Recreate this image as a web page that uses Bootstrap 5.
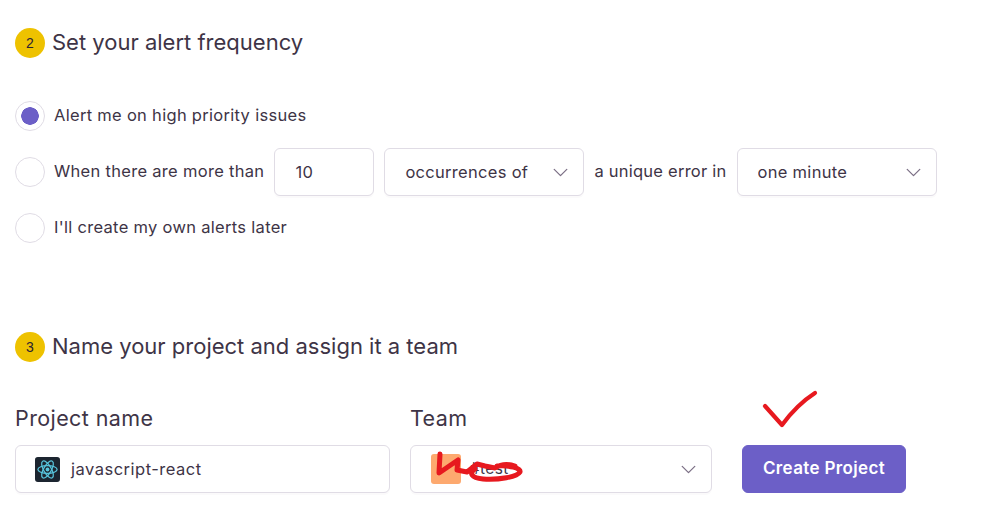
<!DOCTYPE html>
<html lang="en">
<head>
  <meta charset="UTF-8">
  <title>Create Project</title>
  <link href="https://cdn.jsdelivr.net/npm/bootstrap@5.3.3/dist/css/bootstrap.min.css" rel="stylesheet">
  <style>
    body {
      font-family: "Inter", "Liberation Sans", sans-serif;
      color: #3e3446;
      background: #fff;
      overflow: hidden;
    }
    .page-wrap {
      width: 985px;
      height: 518px;
      padding: 28px 0 0 15px;
    }
    .step-num {
      width: 30px;
      height: 30px;
      background: #eec200;
      color: #2b2233;
      font-family: "Liberation Sans", sans-serif;
      font-size: 14px;
    }
    .step-title {
      font-size: 22px;
      font-weight: 400;
      line-height: 30px;
      margin: -2px 0 0 7px;
    }
    .alert-opts {
      margin-top: 30px;
      height: 244px;
    }
    .opt-row {
      height: 56px;
      font-size: 16.5px;
      letter-spacing: .3px;
    }
    .opt-row label, .opt-row span {
      position: relative;
      top: -1px;
    }
    .opt-row span { letter-spacing: .24px; }
    .opt-row .form-check-input {
      width: 30px;
      height: 30px;
      margin: 0 9px 0 0;
      border: 1px solid #e0dce5;
      flex: none;
    }
    .opt-row .form-check-input:checked {
      background-color: #fff;
      border-color: #e0dce5;
      background-image: radial-gradient(circle, #6c5fc7 0, #6c5fc7 8.5px, transparent 9px);
    }
    .opt-row .form-check-input:focus {
      box-shadow: none;
    }
    .form-control.field, .form-select.field {
      height: 48px;
      border: 1px solid #e0dce5;
      border-radius: 6px;
      color: #3e3446;
      font-size: 16.5px;
      letter-spacing: .3px;
      padding: 0 20px;
      box-shadow: 0 2px 0 rgba(37, 11, 54, .02);
    }
    .form-select.field {
      --bs-form-select-bg-img: none;
      background-image: url("data:image/svg+xml,%3csvg xmlns='http://www.w3.org/2000/svg' viewBox='0 0 16 10'%3e%3cpath fill='none' stroke='%237b6f85' stroke-width='1.4' stroke-linecap='round' stroke-linejoin='round' d='M1 1.5l7 7 7-7'/%3e%3c/svg%3e");
      background-position: right 15px center;
      background-size: 15px 9px;
    }
    .w-count { width: 100px; }
    .w-kind { width: 200px; }
    .gap-10 { gap: 10px; }
    .more-label { margin-right: 10px; }
    .project-row { margin-top: 42px; }
    .field-label {
      font-size: 21.5px;
      letter-spacing: .4px;
      line-height: 28px;
      margin-bottom: 13px;
    }
    .name-col { width: 375px; margin-right: 20px; }
    .team-col { width: 302px; margin-right: 30px; }
    .form-control.name-box {
      padding-left: 19px;
      gap: 11px;
      letter-spacing: .5px;
    }
    .form-select.team-box {
      position: relative;
      padding-left: 20px;
      gap: 9px;
    }
    .team-pic {
      width: 30px;
      height: 30px;
      background: #fda96f;
      border-radius: 3px;
    }
    .team-name { font-size: 15.5px; }
    .scribble {
      position: absolute;
      left: 14px;
      top: -1px;
      width: 105px;
      height: 48px;
      overflow: visible;
    }
    .btn-create {
      --bs-btn-bg: #6c5fc7;
      --bs-btn-border-color: #6c5fc7;
      --bs-btn-hover-bg: #5b4eb5;
      --bs-btn-hover-border-color: #5b4eb5;
      --bs-btn-color: #fff;
      --bs-btn-hover-color: #fff;
      width: 164px;
      height: 48px;
      font-size: 17px;
      font-weight: 600;
      letter-spacing: .35px;
      padding: 0;
      border-radius: 6px;
      position: relative;
    }
    .tick {
      position: absolute;
      left: 19px;
      top: -54px;
      width: 56px;
      height: 44px;
      overflow: visible;
    }
  </style>
</head>
<body>

  <div class="page-wrap">
    <div class="d-flex align-items-center">
      <span class="step-num rounded-circle d-flex align-items-center justify-content-center">2</span>
      <h2 class="step-title">Set your alert frequency</h2>
    </div>

    <div class="alert-opts">
      <div class="opt-row d-flex align-items-center">
        <input class="form-check-input" type="radio" name="freq" id="optHigh" checked>
        <label for="optHigh">Alert me on high priority issues</label>
      </div>
      <div class="opt-row d-flex align-items-center">
        <input class="form-check-input" type="radio" name="freq" id="optMore">
        <label for="optMore" class="more-label">When there are more than</label>
        <div class="d-flex align-items-center gap-10">
          <input class="form-control field w-count" type="text" value="10">
          <select class="form-select field w-kind"><option>occurrences of</option></select>
          <span>a unique error in</span>
          <select class="form-select field w-kind"><option>one minute</option></select>
        </div>
      </div>
      <div class="opt-row d-flex align-items-center">
        <input class="form-check-input" type="radio" name="freq" id="optLater">
        <label for="optLater">I'll create my own alerts later</label>
      </div>
    </div>

    <div class="d-flex align-items-center">
      <span class="step-num rounded-circle d-flex align-items-center justify-content-center">3</span>
      <h2 class="step-title">Name your project and assign it a team</h2>
    </div>

    <div class="d-flex align-items-end project-row">
      <div class="name-col">
        <div class="field-label">Project name</div>
        <div class="form-control field name-box d-flex align-items-center">
          <svg width="25" height="25" viewBox="0 0 26 26">
            <rect width="26" height="26" rx="3" fill="#1c2530"/>
            <g fill="none" stroke="#58c4dc" stroke-width="1.3">
              <ellipse cx="13" cy="13" rx="10" ry="4"/>
              <ellipse cx="13" cy="13" rx="10" ry="4" transform="rotate(60 13 13)"/>
              <ellipse cx="13" cy="13" rx="10" ry="4" transform="rotate(120 13 13)"/>
            </g>
            <circle cx="13" cy="13" r="2" fill="#58c4dc"/>
          </svg>
          <span>javascript-react</span>
        </div>
      </div>
      <div class="team-col">
        <div class="field-label">Team</div>
        <div class="form-select field team-box d-flex align-items-center">
          <span class="team-pic d-block"></span>
          <span class="team-name">#test</span>
          <svg class="scribble" viewBox="0 0 105 48">
            <path d="M15 9L14 28L33 15L32 25L42 27L52 19L60 21L70 23C76 19 84 19 90 21M50 24C44 28 46 33 58 34C74 35 92 32 95 27C96 23 84 20 72 21" fill="none" stroke="#e7191f" stroke-width="5" stroke-linecap="round" stroke-linejoin="round"/>
          </svg>
        </div>
      </div>
      <button class="btn btn-create" type="button">
        Create Project
        <svg class="tick" viewBox="0 0 56 44">
          <path d="M3 14L20 33C28 22 39 10 53 1" fill="none" stroke="#e7191f" stroke-width="4.2" stroke-linecap="round" stroke-linejoin="round"/>
        </svg>
      </button>
    </div>
  </div>

  <script src="https://cdn.jsdelivr.net/npm/bootstrap@5.3.3/dist/js/bootstrap.bundle.min.js"></script>

</body>
</html>
